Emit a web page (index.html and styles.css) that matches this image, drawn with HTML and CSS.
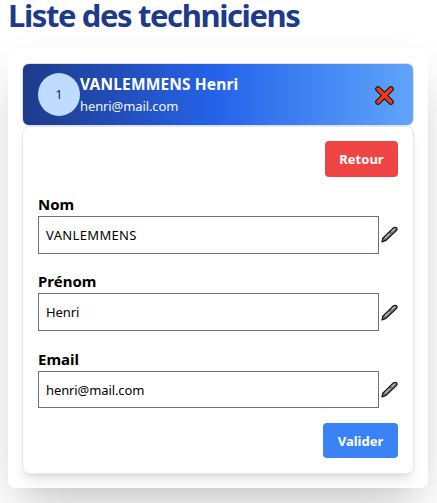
FILE: index.html
```html
<!DOCTYPE html>
<html lang="fr">
<head>
<meta charset="utf-8">
<title>Liste des techniciens</title>
<link rel="stylesheet" href="styles.css">
</head>
<body>
<svg class="defs" width="0" height="0" aria-hidden="true">
  <symbol id="pen" viewBox="0 0 17 17">
    <path d="M1 16 1.8 12.2 12.6 1.8Q14 .8 15.4 1.6 16.6 2.8 15.4 4.6L5 14.4Z" fill="#777" stroke="#111" stroke-width="1.2" stroke-linejoin="round"/>
    <path d="M4 12 8.5 7.7M10.5 5.6 13.8 2.7" stroke="#bbb" stroke-width="1.3"/>
  </symbol>
</svg>
<h1 class="title">Liste des techniciens</h1>
<main class="card">
  <header class="tech">
    <div class="badge">1</div>
    <div class="identity">
      <div class="name">VANLEMMENS Henri</div>
      <div class="mail">henri@mail.com</div>
    </div>
    <svg class="close" viewBox="0 0 20 20"><path d="M3.2 3.2 16.8 16.8M16.8 3.2 3.2 16.8" stroke="#111" stroke-width="6" stroke-linecap="round"/><path d="M3.2 3.2 16.8 16.8M16.8 3.2 3.2 16.8" stroke="#f03a17" stroke-width="3.8" stroke-linecap="round"/></svg>
  </header>
  <form class="panel">
    <button type="button" class="btn back">Retour</button>
    <div class="field">
      <label>Nom</label>
      <div class="row"><div class="input upper">VANLEMMENS</div><svg class="pen"><use href="#pen"/></svg></div>
    </div>
    <div class="field">
      <label>Prénom</label>
      <div class="row"><div class="input">Henri</div><svg class="pen"><use href="#pen"/></svg></div>
    </div>
    <div class="field last">
      <label>Email</label>
      <div class="row"><div class="input">henri@mail.com</div><svg class="pen"><use href="#pen"/></svg></div>
    </div>
    <button type="button" class="btn submit">Valider</button>
  </form>
</main>
</body>
</html>
```
FILE: styles.css
```css
* { box-sizing: border-box; }
html { overflow: hidden; }
body {
  margin: 0;
  padding: 0 8px;
  height: 503px;
  background: #fff;
  color: #000;
  font: 14px/22px "Noto Sans", "Open Sans", sans-serif;
  white-space: nowrap;
}
svg { fill: none; flex: none; }
.defs { position: absolute; }
.title {
  margin: 0 0 17px;
  height: 31px;
  color: #1e3a8a;
  font-size: 31px;
  line-height: 30px;
  letter-spacing: -1.4px;
}
.card {
  width: 420px;
  height: 440px;
  padding: 15px 14px 0;
  border-radius: 7px;
  background: #fff;
  box-shadow: 0 22px 45px -11px rgba(0, 0, 0, .25);
}
.tech {
  display: flex;
  align-items: center;
  height: 63px;
  padding: 0 19px 0 15px;
  border: 1px solid #dbe3ee;
  border-radius: 7px;
  background: linear-gradient(to right, #1e3a8a, #2563eb 50%, #60a5fa);
  color: #fff;
}
.badge {
  width: 42px;
  height: 43px;
  border-radius: 50%;
  background: #bfdbfe;
  color: #1e293b;
  font-size: 13px;
  line-height: 43px;
  text-align: center;
}
.identity { flex: 1; padding-top: 1px; }
.name { font-size: 15.5px; font-weight: 700; letter-spacing: .15px; }
.mail { font-size: 13px; letter-spacing: -.1px; color: #eff6ff; }
.close { width: 19px; height: 19px; margin-top: 1px; overflow: visible; }
.panel {
  display: flex;
  flex-direction: column;
  height: 348px;
  padding: 14px 15px 0;
  border: 1px solid #e5e7eb;
  border-radius: 7px;
  background: #fff;
  box-shadow: 0 9px 14px -3px rgba(0, 0, 0, .1), 0 4px 6px -4px rgba(0, 0, 0, .1);
}
.btn {
  align-self: flex-end;
  flex: none;
  height: 36px;
  padding: 0;
  border: 0;
  border-radius: 4px;
  color: #fff;
  font: 700 13px/36px "Noto Sans", "Open Sans", sans-serif;
}
.back { width: 73px; margin-bottom: 16px; background: #ef4444; }
.submit { width: 75px; height: 35px; background: #3b82f6; }
.field { margin-bottom: 16.8px; }
.last { margin-bottom: 15px; }
.field label { display: block; height: 23px; line-height: 22px; font-size: 15px; font-weight: 700; }
.row { display: flex; align-items: center; }
.input {
  width: 341px;
  flex: none;
  height: 37.6px;
  padding-left: 7px;
  border: 1px solid #6b7280;
  font-size: 13px;
  line-height: 37px;
  letter-spacing: -.1px;
}
.upper { letter-spacing: .35px; }
.pen { width: 17px; height: 17px; margin-left: 2px; }
```
